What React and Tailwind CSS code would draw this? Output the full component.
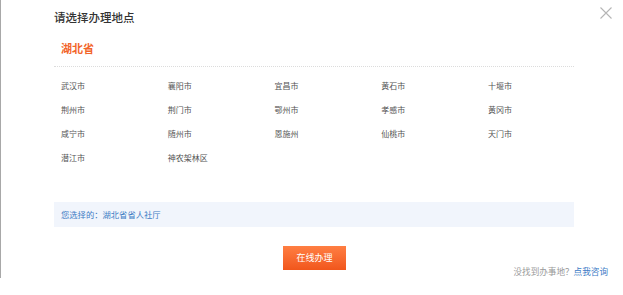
import React from 'react';

const cities = [
  '武汉市', '襄阳市', '宜昌市', '黄石市', '十堰市',
  '荆州市', '荆门市', '鄂州市', '孝感市', '黄冈市',
  '咸宁市', '随州市', '恩施州', '仙桃市', '天门市',
  '潜江市', '神农架林区',
];

export default function App() {
  return (
    <div className="w-[623px] h-[295px] bg-white font-['Noto_Sans_CJK_SC','Noto_Sans',sans-serif]">
      <div className="relative h-[278px] border-l border-[#a8a8a8]">
        {/* close button */}
        <button className="absolute right-[11px] top-[7px] w-[12px] h-[12px]">
          <svg viewBox="0 0 12 12" className="w-[12px] h-[12px]">
            <path d="M0.5 0.5 L11.5 11.5 M11.5 0.5 L0.5 11.5" stroke="#b5b5b5" strokeWidth="1.1" fill="none" />
          </svg>
        </button>

        <div className="pl-[53px] pr-[49px] pt-[9px]">
          <h2 className="text-[11.5px] leading-[16px] text-[#333] font-medium">请选择办理地点</h2>
          <div className="mt-[15px] pl-[7px] text-[11px] leading-[16px] font-bold text-[#f2652b]">湖北省</div>
          <div className="mt-[10px] border-t border-dotted border-[#dcdcdc]" />

          <div className="mt-[7px] pl-[7px] grid grid-cols-[repeat(5,106.75px)]">
            {cities.map((c) => (
              <div key={c} className="h-[24px] flex items-center text-[8px] text-[#555]">
                {c}
              </div>
            ))}
          </div>

          <div className="mt-[32px] h-[25px] bg-[#f1f5fc] px-[7px] flex items-center text-[8.3px] text-[#3e7cc4]">
            您选择的：湖北省省人社厅
          </div>
        </div>

        <div className="mt-[19px] ml-[20px] w-[587px] h-[31px] grid grid-cols-[1fr_auto_1fr]">
          <div />
          <button className="self-start w-[63px] h-[24px] bg-gradient-to-b from-[#ff7e42] to-[#f1561b] text-white text-[9px] flex items-center justify-center">
            在线办理
          </button>
          <div className="self-end justify-self-end text-[8.6px] leading-[12px] text-[#999]">
            没找到办事地？<span className="text-[#3d7bc6]">点我咨询</span>
          </div>
        </div>
      </div>
    </div>
  );
}
